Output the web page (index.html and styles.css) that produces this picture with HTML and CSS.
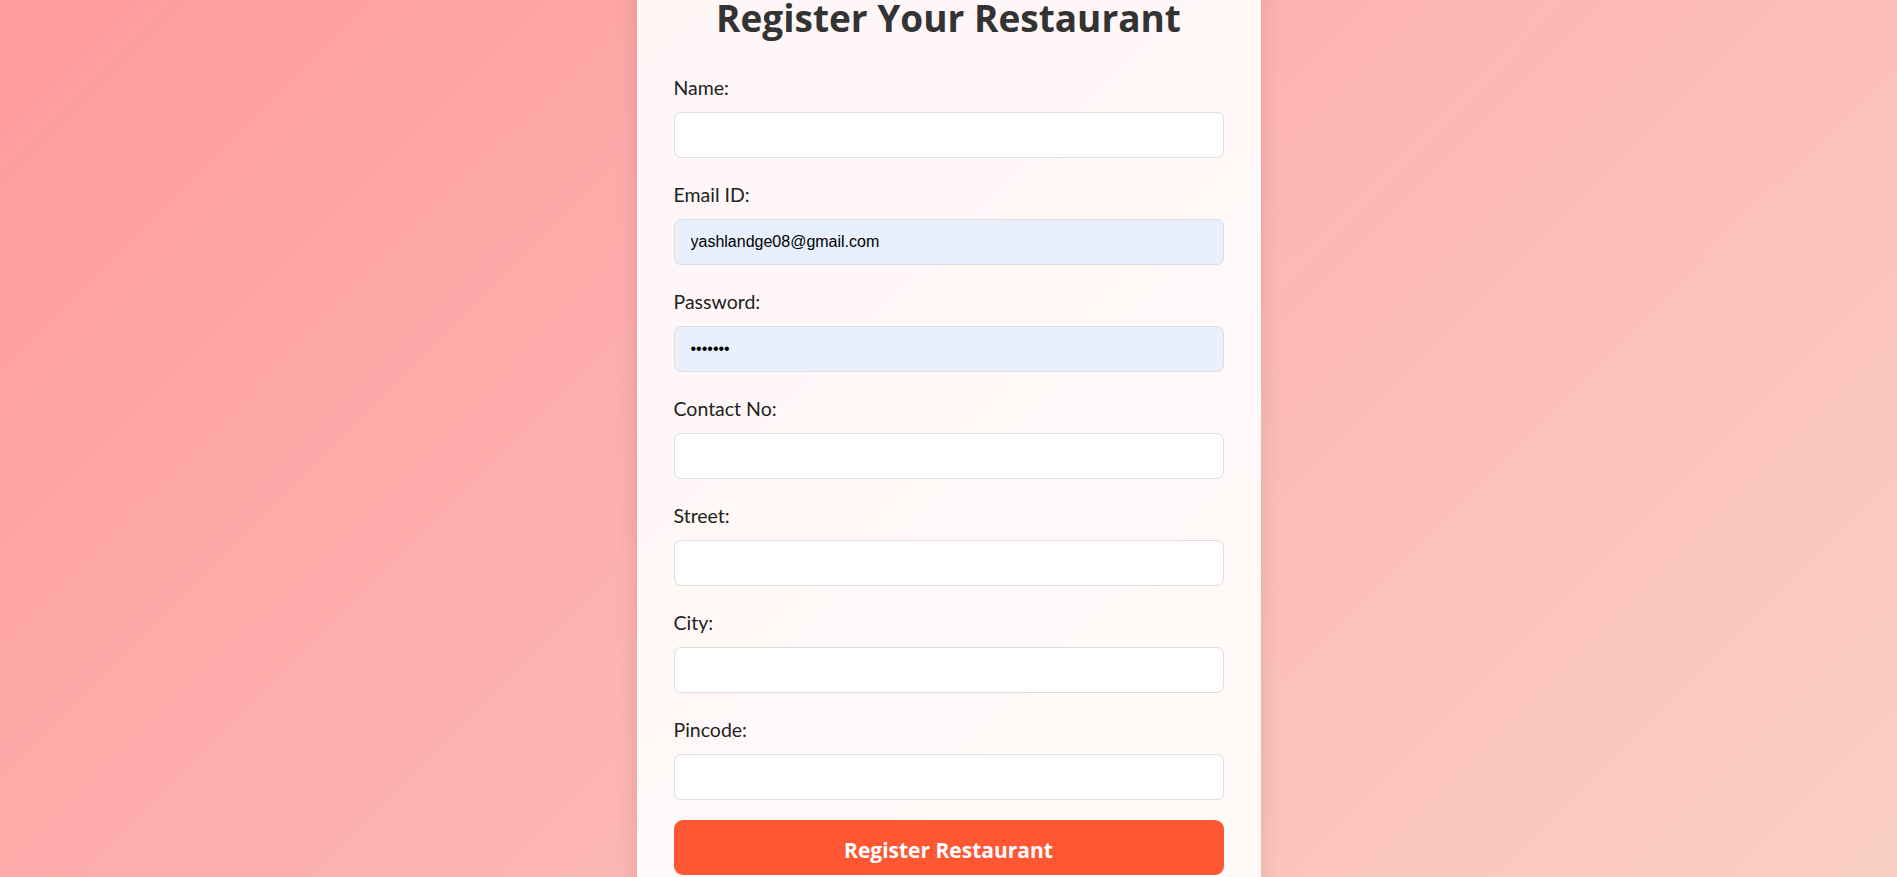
FILE: index.html
```html
<!DOCTYPE html>
<html lang="en">
<head>
<meta charset="UTF-8">
<title>Register Your Restaurant</title>
<link rel="stylesheet" href="styles.css">
</head>
<body>
<div class="card">
  <h2 class="title">Register Your Restaurant</h2>
  <form class="form">
    <div class="field">
      <label class="label" for="name">Name:</label>
      <input class="input" id="name" type="text">
    </div>
    <div class="field">
      <label class="label" for="email">Email ID:</label>
      <input class="input input-filled" id="email" type="email" value="yashlandge08@gmail.com">
    </div>
    <div class="field">
      <label class="label" for="password">Password:</label>
      <input class="input input-filled" id="password" type="password" value="1234567">
    </div>
    <div class="field">
      <label class="label" for="contact">Contact No:</label>
      <input class="input" id="contact" type="text">
    </div>
    <div class="field">
      <label class="label" for="street">Street:</label>
      <input class="input" id="street" type="text">
    </div>
    <div class="field">
      <label class="label" for="city">City:</label>
      <input class="input" id="city" type="text">
    </div>
    <div class="field">
      <label class="label" for="pincode">Pincode:</label>
      <input class="input" id="pincode" type="text">
    </div>
    <button class="submit" type="button">Register Restaurant</button>
  </form>
</div>
</body>
</html>
```
FILE: styles.css
```css
* {
  box-sizing: border-box;
}

html, body {
  margin: 0;
  height: 100%;
}

body {
  background: linear-gradient(135deg, #ff9a9e 0%, #fad0c4 100%);
  display: flex;
  justify-content: center;
  align-items: center;
  overflow: hidden;
  font-family: Lato, "Open Sans", sans-serif;
}

.card {
  flex: none;
  width: 624px;
  padding: 40px 37px 48px;
  background: rgba(255, 255, 255, 0.9);
  box-shadow: 0 0 20px rgba(0, 0, 0, 0.12);
}

.title {
  margin: 0 0 34px;
  text-align: center;
  font-family: "Open Sans", Lato, sans-serif;
  font-size: 37px;
  line-height: 48px;
  font-weight: 700;
  color: #333;
}

.form {
  display: flex;
  flex-direction: column;
}

.field {
  display: flex;
  flex-direction: column;
  gap: 12px;
  margin-bottom: 25px;
}

.field:last-of-type {
  margin-bottom: 20px;
}

.label {
  font-size: 19.5px;
  line-height: 24px;
  color: #222;
}

.input {
  height: 46px;
  width: 100%;
  padding: 0 16px;
  border: 1px solid #ddd;
  border-radius: 7px;
  background: #fff;
  font-family: "Liberation Sans", Arial, sans-serif;
  font-size: 16px;
  color: #000;
  outline: none;
}

.input-filled {
  background: #e8f0fe;
}

.submit {
  height: 55px;
  padding: 4px 0 0;
  border: none;
  border-radius: 9px;
  background: #ff5733;
  color: #fff;
  font-family: "Open Sans", Lato, sans-serif;
  font-size: 21px;
  font-weight: 700;
  cursor: pointer;
}
```
